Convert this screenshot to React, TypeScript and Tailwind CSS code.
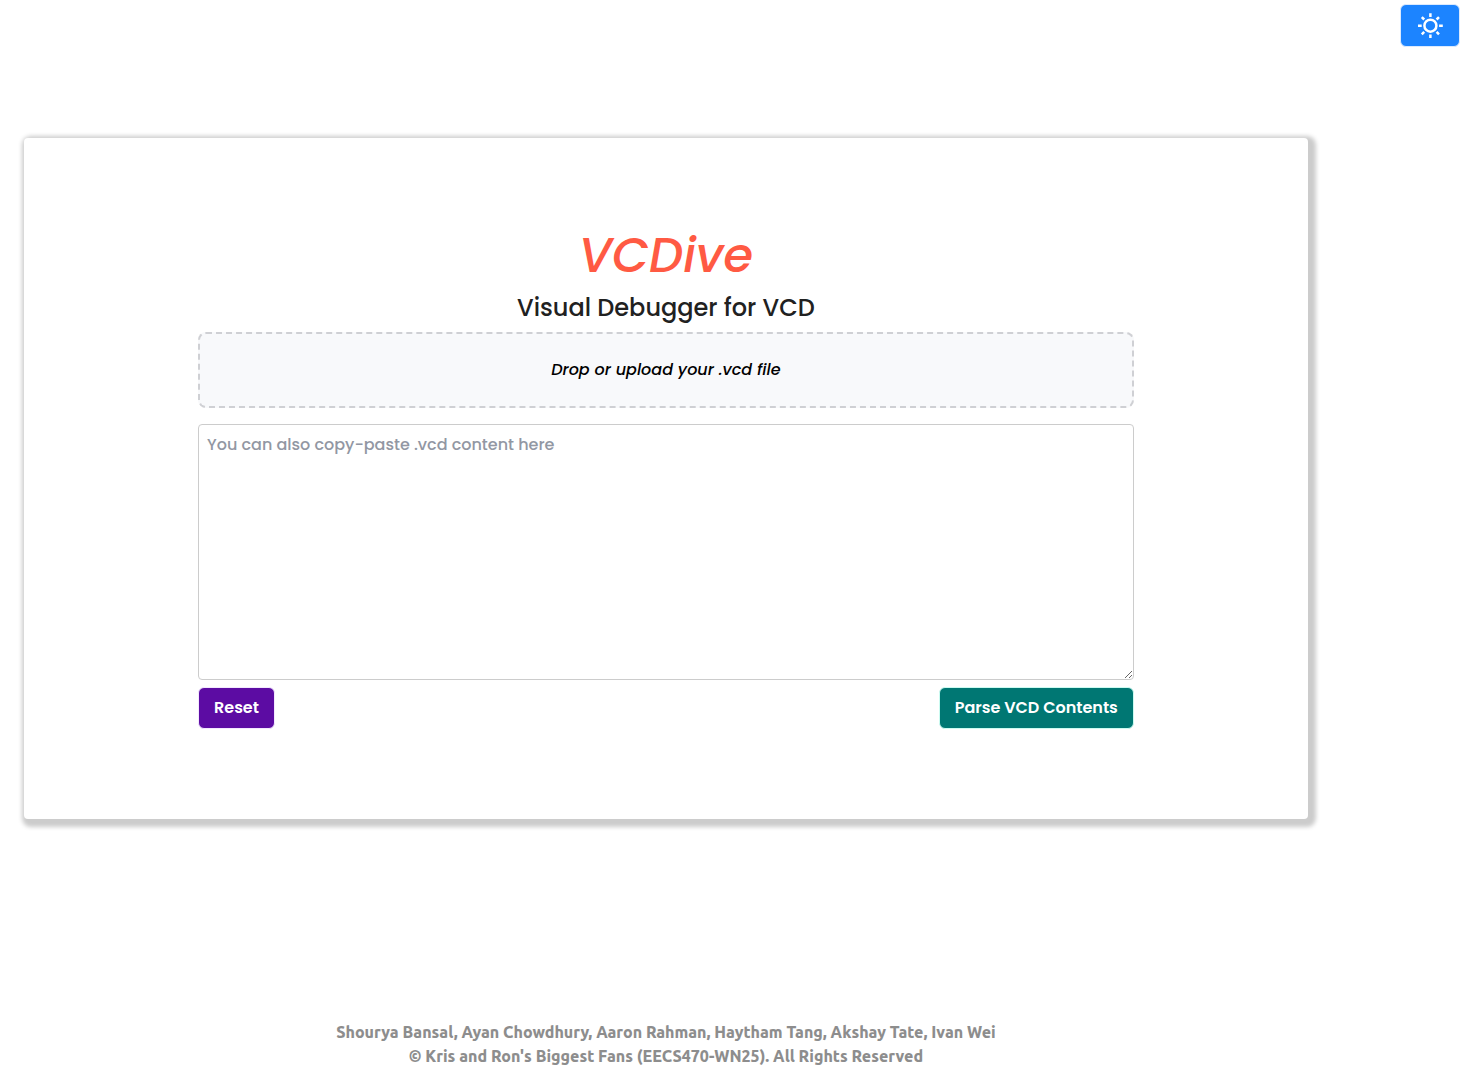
import { useState } from "react";

function SunIcon() {
  return (
    <svg width="26" height="26" viewBox="0 0 26 26" fill="none" stroke="white" strokeWidth="2.5" aria-hidden="true">
      <circle cx="13.4" cy="12.7" r="6" />
      <path d="M13.4 .3v3.7M13.4 21.4v3.7M1 12.7h3.7M22.1 12.7h3.7M4.8 4.1l2.4 2.4M19.6 18.9l2.4 2.4M4.8 21.3l2.4-2.4M19.6 6.5l2.4-2.4" />
    </svg>
  );
}

export default function App() {
  const [content, setContent] = useState("");

  return (
    <div className="flex min-h-screen flex-col bg-white font-[Poppins,Inter,sans-serif] font-medium text-black">
      <header className="flex justify-end px-[5px] pt-[4px]">
        <button
          type="button"
          aria-label="Toggle theme"
          className="h-[43px] rounded-md border border-blue-100 bg-[#1c84ff] px-4"
        >
          <SunIcon />
        </button>
      </header>

      <div className="flex w-10/11 grow flex-col">
        <main className="mx-6 mt-[91px] flex flex-col rounded bg-white px-[174px] pt-[94px] pb-[90px] shadow-[3px_3px_4px_5px_#cccccc]">
          <h1 className="text-center text-5xl leading-[48px] text-[#ff5a43] italic">VCDive</h1>
          <h2 className="mt-3 text-center text-2xl leading-8 text-[#212121]">Visual Debugger for VCD</h2>
          <label className="mt-2 flex h-[76px] cursor-pointer items-center justify-center rounded-lg border-2 border-dashed border-[#cfd0d4] bg-[#f8f9fb] text-base italic">
            Drop or upload your .vcd file
            <input type="file" accept=".vcd" className="sr-only" />
          </label>
          <textarea
            aria-label="VCD content"
            placeholder="You can also copy-paste .vcd content here"
            value={content}
            onChange={(e) => setContent(e.target.value)}
            className="mt-4 block h-64 w-full rounded border border-[#cccccc] px-2 py-2 text-base placeholder:text-[#9297a3]"
          />
          <div className="mt-[7px] flex justify-between text-base font-semibold text-white">
            <button
              type="button"
              onClick={() => setContent("")}
              className="h-[42px] rounded-md border border-purple-100 bg-[#5c0ca3] px-[15px]"
            >
              Reset
            </button>
            <button type="button" className="h-[42px] rounded-md border border-teal-100 bg-[#007773] px-[15px]">
              Parse VCD Contents
            </button>
          </div>
        </main>

        <footer className="mt-auto pt-6 text-center font-[Ubuntu,'Noto_Sans',sans-serif] text-base leading-6 font-extrabold text-[#8d8d8d]">
          <p>Shourya Bansal, Ayan Chowdhury, Aaron Rahman, Haytham Tang, Akshay Tate, Ivan Wei</p>
          <p>© Kris and Ron's Biggest Fans (EECS470-WN25). All Rights Reserved</p>
        </footer>
      </div>
    </div>
  );
}
